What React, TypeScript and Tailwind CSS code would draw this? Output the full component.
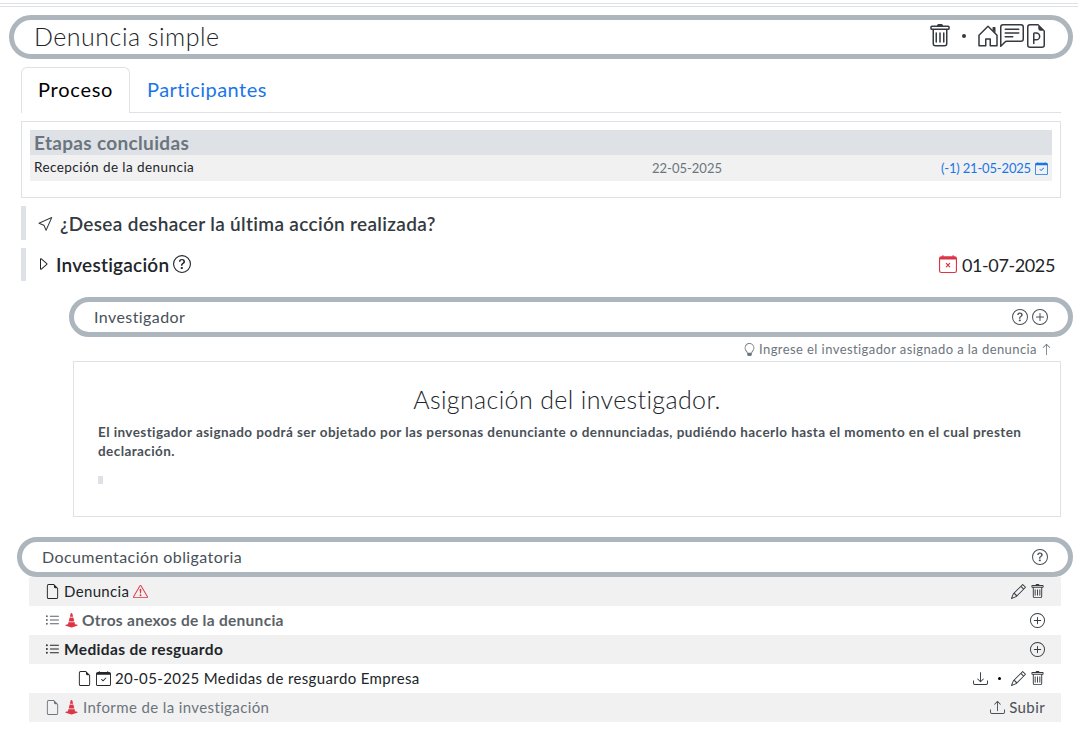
import type { ReactNode } from "react";
import {
  BsTrash, BsChatLeftText, BsFileEarmarkPpt, BsCalendarCheck, BsCursor, BsCaretRight,
  BsQuestionCircle, BsPlusCircle, BsCalendarX, BsLightbulb, BsArrowUp, BsFileEarmark,
  BsExclamationTriangle, BsListUl, BsConeStriped, BsPencil, BsDownload, BsUpload,
} from "react-icons/bs";

function House() {
  return (
    <svg viewBox="0 0 16 16" className="size-6" fill="currentColor">
      <path fillRule="evenodd" d="M7.646 1.146a.5.5 0 0 1 .708 0l6 6a.5.5 0 0 1 .146.354v7a.5.5 0 0 1-.5.5H9.5a.5.5 0 0 1-.5-.5v-4H7v4a.5.5 0 0 1-.5.5H2a.5.5 0 0 1-.5-.5v-7a.5.5 0 0 1 .146-.354l6-6zM2.5 7.707V14H6v-4a.5.5 0 0 1 .5-.5h3a.5.5 0 0 1 .5.5v4h3.5V7.707L8 2.207l-5.5 5.5z" />
      <path d="M13 2.5V6l-2-2V2.5a.5.5 0 0 1 .5-.5h1a.5.5 0 0 1 .5.5z" />
    </svg>
  );
}

function Pill({ className, children }: { className: string; children: ReactNode }) {
  return (
    <div className={`flex shrink-0 items-center justify-between rounded-full border-[5px] border-[#adb5bd] pl-5 ${className}`}>
      {children}
    </div>
  );
}

function Row({ className, children }: { className: string; children: ReactNode }) {
  return (
    <div className={`flex h-[29px] items-center justify-between pr-4 text-[15px] whitespace-nowrap text-[#212529] ${className}`}>
      {children}
    </div>
  );
}

export default function App() {
  return (
    <div className="flex h-[731px] w-[1078px] flex-col overflow-hidden bg-white font-['Lato',sans-serif] leading-none text-[#212529]">
      <div className="mt-[3px] h-1 shrink-0 border-y border-[#dee2e6]" />

      <Pill className="mt-2 mr-[5px] ml-[9px] h-11 pr-5 pb-[2px]">
        <h1 className="text-[25px] leading-none font-light tracking-[0.5px] text-[#212529]">Denuncia simple</h1>
        <div className="flex items-center text-[#343a40]">
          <BsTrash className="size-6" />
          <span className="mr-[10px] ml-[10px] size-1 rounded-full bg-[#343a40]" />
          <House />
          <BsChatLeftText className="size-6" />
          <BsFileEarmarkPpt className="size-6" />
        </div>
      </Pill>

      <nav className="mt-2 mr-[17px] ml-[21px] flex h-[46px] shrink-0 text-xl leading-none">
        <div className="flex w-[109px] items-center rounded-t-md border border-b-0 border-[#dee2e6] pb-[3px] pl-4 text-black">
          <span className="tracking-[0.75px]">Proceso</span>
        </div>
        <div className="flex flex-1 items-center border-b border-[#dee2e6] pb-[2px] pl-[17px] text-[#1a76e8]">
          <span className="tracking-[0.47px]">Participantes</span>
        </div>
      </nav>

      <section className="mt-2 mr-[17px] ml-[21px] h-[77px] shrink-0 border border-[#dee2e6] p-2">
        <div className="flex h-[25px] items-center bg-[#dee2e6] pb-px pl-1 text-[19px] leading-none font-bold tracking-[0.33px] text-[#6c757d]">Etapas concluidas</div>
        <div className="grid h-[26px] grid-cols-[618px_1fr_auto] items-center bg-[#f1f1f1] pr-1 pl-1 text-[13px]">
          <span className="text-[13.5px] tracking-[0.44px]">Recepción de la denuncia</span>
          <span className="text-[#6c757d]">22-05-2025</span>
          <span className="flex items-center gap-1 text-[#1a76e8]">
            <span className="tracking-[-0.17px]">(-1) 21-05-2025</span>
            <BsCalendarCheck className="size-[13px]" />
          </span>
        </div>
      </section>

      <div className="mt-2 ml-[21px] flex h-[34px] shrink-0 items-center border-l-[5px] border-[#dee2e6] pl-3 text-[19px] leading-none font-semibold text-[#343a40]">
        <BsCursor className="mr-[6px] size-4" />
        <span className="tracking-[0.32px]">¿Desea deshacer la última acción realizada?</span>
      </div>
      <div className="mt-2 mr-[23px] ml-[21px] flex h-[33px] shrink-0 items-center justify-between border-l-[5px] border-[#dee2e6] pl-[9px] text-lg leading-none">
        <div className="flex items-center pb-px">
          <BsCaretRight className="mr-[5px] size-4" />
          <span className="text-[19px] font-semibold tracking-[0.23px]">Investigación</span>
          <BsQuestionCircle className="ml-1 size-[18px]" />
        </div>
        <div className="flex items-center gap-[5px]">
          <BsCalendarX className="mb-[2px] size-[18px] text-[#dc3545]" />
          <span className="tracking-[-0.38px]">01-07-2025</span>
        </div>
      </div>

      <Pill className="mt-4 mr-[5px] ml-[69px] h-10 pr-5 text-[#495057]">
        <span className="text-base leading-none tracking-[0.42px]">Investigador</span>
        <div className="flex gap-1"><BsQuestionCircle className="size-4" /><BsPlusCircle className="size-4" /></div>
      </Pill>
      <div className="mr-[25px] flex h-6 shrink-0 items-center justify-end text-[13px] text-[#6c757d]">
        <BsLightbulb className="mr-[3px] size-[13px]" />
        <span className="tracking-[0.42px]">Ingrese el investigador asignado a la denuncia</span>
        <BsArrowUp className="ml-[3px] size-[13px]" />
      </div>

      <section className="mr-[17px] ml-[73px] h-[156px] shrink-0 border border-[#dee2e6] px-6 pt-[23px] text-[#495057]">
        <h2 className="text-center text-[25px] leading-[29px] font-light tracking-[0.36px] text-[#212529]">Asignación del investigador.</h2>
        <p className="mt-[9px] text-[13.5px] leading-[19px] font-bold tracking-[0.42px] whitespace-nowrap">
          El investigador asignado podrá ser objetado por las personas denunciante o dennunciadas, pudiéndo hacerlo hasta el momento en el cual presten<br />declaración.
        </p>
        <div className="mt-[15px] h-2 w-[5px] bg-[#dee2e6]" />
      </section>

      <Pill className="mt-5 mr-[5px] ml-[17px] h-10 pr-5 text-[#495057]">
        <span className="text-base leading-none tracking-[0.42px]">Documentación obligatoria</span>
        <BsQuestionCircle className="size-4" />
      </Pill>
      <div className="mr-[17px] ml-[29px] shrink-0">
        <Row className="bg-[#f1f1f1] pl-4">
          <div className="flex items-center gap-1"><BsFileEarmark /><span className="tracking-[0.35px]">Denuncia</span><BsExclamationTriangle className="text-[#dc3545]" /></div>
          <div className="flex gap-1 text-[#343a40]"><BsPencil /><BsTrash /></div>
        </Row>
        <Row className="pl-4">
          <div className="flex items-center gap-[3.5px] text-[#5a6268]"><BsListUl /><BsConeStriped className="text-[#dc3545]" /><span className="text-[15.5px] font-bold tracking-[0.28px]">Otros anexos de la denuncia</span></div>
          <BsPlusCircle className="text-[#343a40]" />
        </Row>
        <Row className="bg-[#f1f1f1] pl-4">
          <div className="flex items-center gap-1"><BsListUl /><span className="text-[15.5px] font-bold tracking-[0.35px]">Medidas de resguardo</span></div>
          <BsPlusCircle className="text-[#343a40]" />
        </Row>
        <Row className="pl-12">
          <div className="flex items-center gap-[3.5px]"><BsFileEarmark /><BsCalendarCheck /><span className="pl-px tracking-[0.38px]">20-05-2025 Medidas de resguardo Empresa</span></div>
          <div className="flex items-center gap-1 text-[#343a40]"><BsDownload /><span className="mr-[6px] ml-[6px] size-[3px] rounded-full bg-black" /><BsPencil /><BsTrash /></div>
        </Row>
        <Row className="bg-[#f1f1f1] pl-4">
          <div className="flex items-center gap-[3.5px] text-[#6c757d]"><BsFileEarmark /><BsConeStriped className="text-[#dc3545]" /><span className="pl-px tracking-[0.38px]">Informe de la investigación</span></div>
          <div className="flex items-center gap-1 text-[#495057]"><BsUpload /><span className="tracking-[0.4px]">Subir</span></div>
        </Row>
      </div>
    </div>
  );
}
